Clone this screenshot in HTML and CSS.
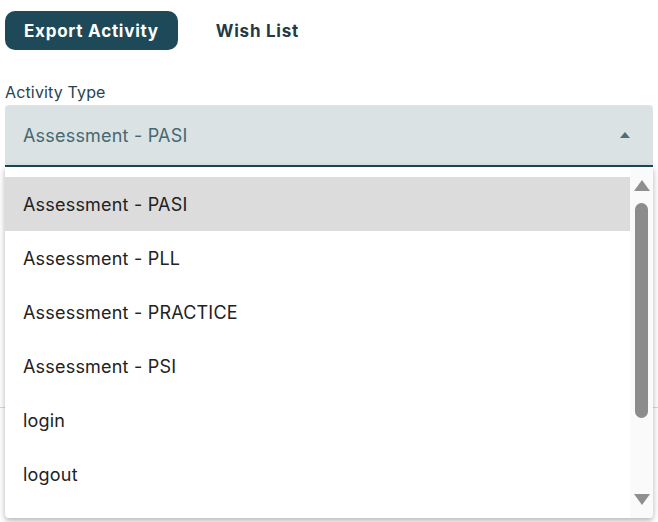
FILE: index.html
```html
<!DOCTYPE html>
<html>
<head>
<meta charset="utf-8">
<link rel="stylesheet" href="styles.css">
</head>
<body>
<div class="tabs">
  <button class="tab active">Export Activity</button>
  <button class="tab">Wish List</button>
</div>
<div class="field">
  <label class="label">Activity Type</label>
  <div class="select">
    <span class="value">Assessment - PASI</span>
    <svg class="caret" width="10" height="6" viewBox="0 0 10 6"><path d="M0 6 L5 0 L10 6 Z" fill="#4d6f78"/></svg>
  </div>
  <div class="menu">
    <ul class="options">
      <li class="opt selected">Assessment - PASI</li>
      <li class="opt">Assessment - PLL</li>
      <li class="opt">Assessment - PRACTICE</li>
      <li class="opt">Assessment - PSI</li>
      <li class="opt">login</li>
      <li class="opt">logout</li>
    </ul>
    <div class="scrollbar">
      <svg class="arrow" width="16" height="11" viewBox="0 0 16 11"><path d="M0 11 L8 0 L16 11 Z" fill="#8f8f8f"/></svg>
      <div class="track"><div class="thumb"></div></div>
      <svg class="arrow" width="16" height="11" viewBox="0 0 16 11"><path d="M0 0 L8 11 L16 0 Z" fill="#8f8f8f"/></svg>
    </div>
  </div>
</div>
<div class="below"></div>
</body>
</html>
```
FILE: styles.css
```css
* { box-sizing: border-box; }
html, body { margin: 0; padding: 0; background: #fff; }
body {
  font-family: Inter, "Noto Sans", sans-serif;
  padding: 11px 5px 0 5px;
  height: 522px;
  overflow: hidden;
}
.tabs { display: flex; gap: 0; align-items: center; }
.tab {
  font-family: Inter, sans-serif;
  font-weight: 700;
  font-size: 17px;
  letter-spacing: 0.75px;
  border: none;
  background: transparent;
  color: #233a45;
  height: 39px;
  padding: 0 19px;
  border-radius: 10px;
  margin: 0;
}
.tab.active { background: #1d4958; color: #fff; margin-right: 19px; }
.field { position: relative; margin-top: 34px; }
.label {
  display: block;
  font-size: 16px;
  letter-spacing: 0.15px;
  color: #29444f;
  line-height: 17px;
  margin-bottom: 4px;
}
.select {
  height: 62px;
  background: #dae2e4;
  border-bottom: 2px solid #1d4958;
  border-radius: 4px 4px 0 0;
  display: flex;
  align-items: center;
  justify-content: space-between;
  padding: 0 23px 0 18px;
}
.value { font-size: 18px; letter-spacing: 0.2px; color: #466871; }
.caret { margin-top: -1px; }
.menu {
  position: absolute;
  left: 0;
  top: 83px;
  width: 648px;
  height: 351px;
  background: #fff;
  border-radius: 0 0 4px 4px;
  box-shadow: 0 3px 5px rgba(0,0,0,0.2), 0 1px 10px rgba(0,0,0,0.12);
  display: flex;
  z-index: 2;
}
.options {
  list-style: none;
  margin: 0;
  padding: 10px 0 0 0;
  flex: 1;
}
.opt {
  height: 54px;
  display: flex;
  align-items: center;
  padding-left: 18px;
  font-size: 18px;
  letter-spacing: 0.2px;
  color: #222;
}
.opt.selected { background: #dcdcdc; }
.scrollbar {
  width: 23px;
  background: #fafafa;
  display: flex;
  flex-direction: column;
  align-items: center;
  padding: 13px 0 13px 0;
  border-radius: 0 0 4px 0;
}
.track { flex: 1; width: 100%; display: flex; justify-content: center; padding-top: 12px; }
.thumb { width: 13px; height: 215px; background: #8c8c8c; border-radius: 7px; }
.below {
  margin: 240px -5px 0 -5px;
  border-top: 1px solid #d6dadc;
}
```
